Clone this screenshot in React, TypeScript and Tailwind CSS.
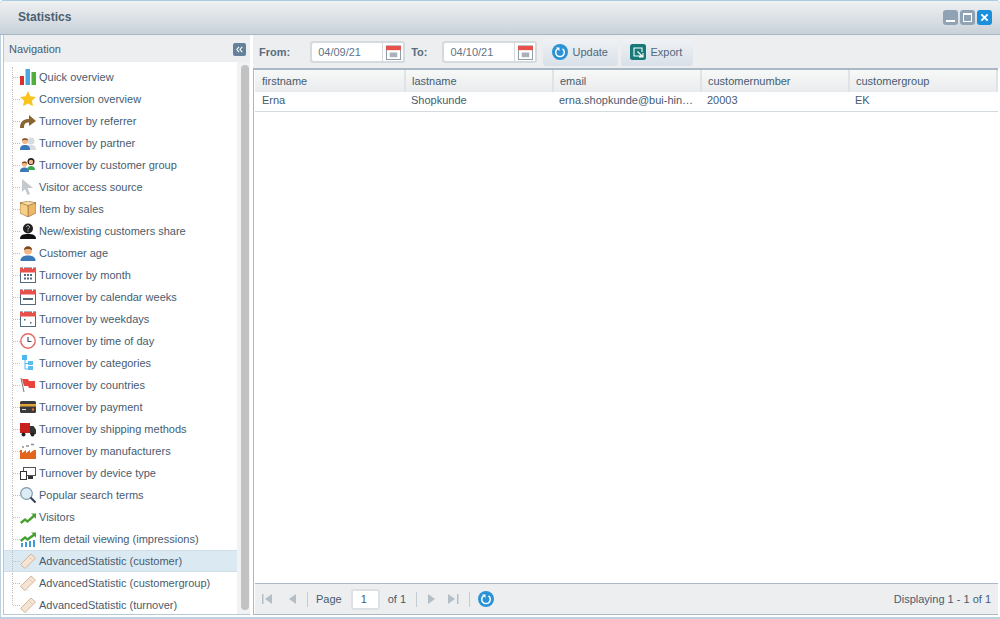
import type { ReactNode } from "react";

const Cal = ({ body }: { body: ReactNode }) => (
  <svg viewBox="0 0 16 16" className="h-4 w-4">
    <rect x="0.5" y="1" width="15" height="14.5" fill="#fff" stroke="#54697c" />
    <rect x="0" y="1" width="16" height="4.5" fill="#e8504a" />
    <rect x="3" y="0" width="1" height="2" fill="#fff" />
    <rect x="12" y="0" width="1" height="2" fill="#fff" />
    {body}
  </svg>
);

const Person = ({ x = 0, c = "#3a78b8", skin = "#f3b684", hair = "#7a4a22" }) => (
  <g transform={`translate(${x} 0)`}>
    <circle cx="5" cy="5" r="3" fill={skin} />
    <path d="M2 4.5C2 1.5 8 1.5 8 4.5 6 3.5 4 3.5 2 4.5Z" fill={hair} />
    <path d="M0 14c0-4 2-5 5-5s5 1 5 5Z" fill={c} />
  </g>
);

const Ticket = () => (
  <svg viewBox="0 0 16 16" className="h-4 w-4">
    <path d="M0.500 11.500 11 1l4.500 4L5 15.500Z" fill="#f6e4d3" stroke="#c9a78c" strokeWidth="0.8" />
    <path d="M8.500 3.500l4.500 4" stroke="#c9a78c" strokeWidth="0.7" strokeDasharray="1 1" />
    <path d="M3 15.800h7" stroke="#dcdcdc" strokeWidth="0.6" />
  </svg>
);

const icons: ReactNode[] = [
  <svg viewBox="0 0 16 16" className="h-4 w-4"><rect x="0" y="7" width="4" height="9" fill="#d9322e" /><rect x="5.500" y="0" width="4.500" height="16" fill="#4aa8e0" /><rect x="11.500" y="3" width="4.500" height="13" fill="#4fae3c" /></svg>,
  <svg viewBox="0 0 16 16" className="h-4 w-4"><path d="M8 0l2.400 5.200 5.600.7-4.100 3.800 1.100 5.600L8 12.500 3 15.300l1.100-5.600L0 5.900l5.600-.7Z" fill="#f7c51e" /></svg>,
  <svg viewBox="0 0 16 16" className="h-4 w-4"><path d="M0 15C0 8 4 6 9 6V2l7 6-7 5V9.500C5 9.500 4 11 4 15Z" fill="#8a6530" /></svg>,
  <svg viewBox="0 0 16 16" className="h-4 w-4"><g transform="translate(6 1)"><circle cx="5" cy="5" r="3.500" fill="#d8dcdf" /><path d="M0 14c0-4 2-5 5-5s5 1 5 5Z" fill="#d8dcdf" /></g><g transform="translate(0 1)"><Person /></g></svg>,
  <svg viewBox="0 0 16 16" className="h-4 w-4"><g transform="translate(0 2.500) scale(.9)"><Person /></g><g transform="translate(6 0)"><circle cx="5" cy="4.500" r="3.500" fill="#2b2320" /><circle cx="5" cy="5" r="2.200" fill="#f3b684" /><path d="M1 13c0-3 2-4 4-4s4 1 4 4Z" fill="#3aa655" /></g></svg>,
  <svg viewBox="0 0 16 16" className="h-4 w-4"><path d="M2 0l11 9H7.500l2.500 6-2.500 1-2.500-6L2 13Z" fill="#c4c9cd" /></svg>,
  <svg viewBox="0 0 16 16" className="h-4 w-4"><path d="M8 4 16 1.500V12l-8 4Z" fill="#eeb766" stroke="#8f6a33" strokeWidth="0.600" /><path d="M8 4 0 1.500V12l8 4Z" fill="#f7cf87" stroke="#8f6a33" strokeWidth="0.600" /><path d="M0 2 8 0l8 2-8 2.500Z" fill="#f9dca3" stroke="#8f6a33" strokeWidth="0.600" /></svg>,
  <svg viewBox="0 0 16 16" className="h-4 w-4"><circle cx="8" cy="5.500" r="5" fill="#222" /><path d="M0 16c0-4 3-5 8-5s8 1 8 5Z" fill="#111" /><path d="M6.500 4c0-2 3-2 3 0 0 1-1.500 1-1.500 2.500M8 7.500v1" stroke="#ccc" fill="none" /></svg>,
  <svg viewBox="0 0 16 16" className="h-4 w-4"><circle cx="8" cy="5.500" r="4" fill="#f3b684" /><path d="M4 5C4 0 12 0 12 5 10 3.500 6 3.500 4 5Z" fill="#7a4a22" /><path d="M0.500 16c0-4 3-5.500 7.500-5.500s7.500 1.500 7.500 5.500Z" fill="#3a78b8" /></svg>,
  <Cal body={<g fill="#54697c"><rect x="4" y="7" width="2" height="2" /><rect x="7" y="7" width="2" height="2" /><rect x="10" y="7" width="2" height="2" /><rect x="4" y="10.500" width="2" height="2" /><rect x="7" y="10.500" width="2" height="2" /><rect x="10" y="10.500" width="2" height="2" /></g>} />,
  <Cal body={<rect x="3" y="9" width="10" height="2" fill="#54697c" />} />,
  <Cal body={<g fill="#54697c"><rect x="4" y="8" width="1.500" height="1.500" /><rect x="10" y="11" width="1.500" height="1.500" /></g>} />,
  <svg viewBox="0 0 16 16" className="h-4 w-4"><circle cx="8" cy="8" r="7.200" fill="#fff" stroke="#e2685f" strokeWidth="1.400" /><path d="M8 4v4.500h3.500" fill="none" stroke="#44576a" strokeWidth="1.200" /></svg>,
  <svg viewBox="0 0 16 16" className="h-4 w-4"><rect x="2" y="0" width="5" height="5" fill="#4cb8ee" /><path d="M5 5v9h3M5 8.500h3" stroke="#4cb8ee" fill="none" /><rect x="8" y="6" width="5" height="4" fill="#5fbcee" /><rect x="8" y="11" width="5" height="4" fill="#5fbcee" /></svg>,
  <svg viewBox="0 0 16 16" className="h-4 w-4"><path d="M1 1l3 14" stroke="#777" /><path d="M2 2h6l1 2h6v7H9L8 9H4Z" fill="#e9433e" /></svg>,
  <svg viewBox="0 0 16 16" className="h-4 w-4"><rect x="0" y="2" width="16" height="12" rx="1.500" fill="#3a3a3a" /><rect x="0" y="5" width="16" height="2.500" fill="#e2a33a" /><rect x="2" y="10" width="4" height="1" fill="#ddd" /><circle cx="13" cy="10.500" r="1.200" fill="#e8702a" /></svg>,
  <svg viewBox="0 0 16 16" className="h-4 w-4"><rect x="0" y="2" width="10" height="10" fill="#c9201c" /><path d="M10 5h3.500L16 8.500V13H10Z" fill="#333" /><circle cx="3.500" cy="13.500" r="2" fill="#222" /><circle cx="12.500" cy="13.500" r="2" fill="#222" /></svg>,
  <svg viewBox="0 0 16 16" className="h-4 w-4"><path d="M0 7h2v3l4-3v3l4-3v3l4-3h2v9H0Z" fill="#e2641f" /><path d="M2 4h2M6 3h3M11 1.500h3" stroke="#8a8f94" strokeWidth="1.500" /></svg>,
  <svg viewBox="0 0 16 16" className="h-4 w-4"><rect x="3.500" y="2.500" width="12" height="8" fill="#fff" stroke="#555" /><rect x="0.500" y="6.500" width="6" height="8" fill="#fff" stroke="#333" /><rect x="8" y="11" width="5" height="3" fill="#333" /></svg>,
  <svg viewBox="0 0 16 16" className="h-4 w-4"><circle cx="6.500" cy="6.500" r="5.800" fill="#dcecf5" stroke="#7f98ab" strokeWidth="1.200" /><path d="M10.500 10.500 15.500 15.500" stroke="#33404c" strokeWidth="2" /></svg>,
  <svg viewBox="0 0 16 16" className="h-4 w-4"><path d="M0 13l5-4 2.500 2L13 6l-2-1.500h5V10l-1.500-2L7.500 14 5 12l-3.500 3Z" fill="#46a02f" /></svg>,
  <svg viewBox="0 0 16 16" className="h-4 w-4"><path d="M0 9l5-4 2.500 2L13 3l-2-1.500h5V7l-1.500-2L7.500 10 5 8l-3.500 3Z" fill="#46a02f" /><g fill="#3f9bdc"><rect x="1" y="12" width="2" height="4" /><rect x="5" y="11" width="2" height="5" /><rect x="9" y="10" width="2" height="6" /><rect x="13" y="9" width="2" height="7" /></g></svg>,
  <Ticket />,
  <Ticket />,
  <Ticket />,
];

const labels = [
  "Quick overview",
  "Conversion overview",
  "Turnover by referrer",
  "Turnover by partner",
  "Turnover by customer group",
  "Visitor access source",
  "Item by sales",
  "New/existing customers share",
  "Customer age",
  "Turnover by month",
  "Turnover by calendar weeks",
  "Turnover by weekdays",
  "Turnover by time of day",
  "Turnover by categories",
  "Turnover by countries",
  "Turnover by payment",
  "Turnover by shipping methods",
  "Turnover by manufacturers",
  "Turnover by device type",
  "Popular search terms",
  "Visitors",
  "Item detail viewing (impressions)",
  "AdvancedStatistic (customer)",
  "AdvancedStatistic (customergroup)",
  "AdvancedStatistic (turnover)",
];

const columns = [
  { name: "firstname", w: "w-[151px]", value: "Erna", pad: "pl-[7px]", headPad: "pl-[7px]" },
  { name: "lastname", w: "w-[148px]", value: "Shopkunde", pad: "pl-[5px]", headPad: "pl-[6px]" },
  { name: "email", w: "w-[148px]", value: "erna.shopkunde@bui-hin…", pad: "pl-[5px]", headPad: "pl-[6px]" },
  { name: "customernumber", w: "w-[148px]", value: "20003", pad: "pl-[5px]", headPad: "pl-[6px]" },
  { name: "customergroup", w: "flex-1", value: "EK", pad: "pl-[5px]", headPad: "pl-[6px]" },
];

const RefreshIcon = ({ size = "h-4 w-4" }: { size?: string }) => (
  <svg viewBox="0 0 16 16" className={size}>
    <circle cx="8" cy="8" r="8" fill="#2a93d5" />
    <path d="M5.500 4.800A4.300 4.300 0 1 0 10.500 4.800" fill="none" stroke="#fff" strokeWidth="1.500" />
    <path d="M4 3.500h3.500V7Z" fill="#fff" />
  </svg>
);

const DateField = ({ value }: { value: string }) => (
  <div className="flex h-[22px] w-[95px] rounded-[3px] bg-[#d5dade] p-[2px]">
    <div className="flex h-[18px] flex-1 items-center rounded-l-[2px] bg-white pl-[6px] text-[#5f7486]">{value}</div>
    <div className="flex h-[18px] w-[21px] items-center justify-center border-l border-[#d5dade] bg-white">
      <svg viewBox="0 0 16 16" className="h-[15px] w-[15px]">
        <rect x="0.500" y="1" width="15" height="14.500" fill="#fff" stroke="#8a97a3" />
        <rect x="0" y="1" width="16" height="4.500" fill="#e8504a" />
        <rect x="4" y="8" width="8" height="5" fill="#a9b2ba" />
      </svg>
    </div>
  </div>
);

const PagerIcon = ({ d }: { d: string }) => (
  <svg viewBox="0 0 14 14" className="h-[14px] w-[14px]">
    <path d={d} fill="#b4bec7" />
  </svg>
);

const Sep = ({ className = "ml-[8px]" }: { className?: string }) => (
  <div className={`${className} mr-[8px] h-[15px] w-px bg-[#c3ccd3]`} />
);

export default function App() {
  return (
    <div className="flex h-[619px] w-[1000px] flex-col overflow-hidden rounded-t-[4px] border-t border-[#a9cde0] bg-[#bdd1de] font-['Liberation_Sans',sans-serif] text-[11px] text-[#475c6f]">
      <div className="flex h-[34px] shrink-0 items-center justify-between border-b border-[#a5b7c5] bg-gradient-to-b from-[#f0f1f2] to-[#c8d1d9] pl-[18px] pr-[8px]">
        <span className="pb-[2px] text-[12px] font-bold text-[#4b5f70]">Statistics</span>
        <div className="flex gap-[2px]">
          <div className="flex h-[15px] w-[15px] items-end justify-center rounded-[3px] bg-[#8fa3b5] pb-[3px]">
            <div className="h-[2px] w-[9px] bg-white" />
          </div>
          <div className="flex h-[15px] w-[15px] items-center justify-center rounded-[3px] bg-[#8fa3b5]">
            <div className="h-[9px] w-[9px] border-[1.500px] border-t-[2px] border-white" />
          </div>
          <div className="flex h-[15px] w-[15px] items-center justify-center rounded-[3px] bg-[#1a8fdc]">
            <svg viewBox="0 0 10 10" className="h-[9px] w-[9px]">
              <path d="M1.500 1.500 8.500 8.500M8.500 1.500 1.500 8.500" stroke="#fff" strokeWidth="2.200" />
            </svg>
          </div>
        </div>
      </div>

      <div className="mb-[2px] flex min-h-0 flex-1 gap-[3px] border-l border-[#bdd1de] bg-white pb-[2px]">
        <div className="ml-[2px] flex w-[247px] shrink-0 flex-col border-b border-l border-[#b4c8d6]">
          <div className="flex h-[27px] shrink-0 items-center justify-between bg-[#eceef0] pl-[5px] pr-[4px] pt-[2px]">
            <span>Navigation</span>
            <div className="flex h-[13px] w-[13px] items-center justify-center rounded-[2px] bg-[#64809a]">
              <svg viewBox="0 0 10 10" className="h-[9px] w-[9px]">
                <path d="M4.500 2 2 5l2.500 3M8 2 5.500 5 8 8" fill="none" stroke="#fff" strokeWidth="1.200" />
              </svg>
            </div>
          </div>
          <div className="flex min-h-0 flex-1 bg-white">
            <div className="flex-1 pt-[4px]">
              {labels.map((label, i) => (
                <div
                  key={label}
                  className={`flex h-[22px] items-center border-y pl-[8px] ${
                    label === "AdvancedStatistic (customer)"
                      ? "border-[#cfdfe9] bg-[#dbe9f3]"
                      : "border-transparent"
                  }`}
                >
                  <div className={`w-px self-stretch border-l border-dotted border-[#c0c0c0] ${i === labels.length - 1 ? "mb-[10px]" : ""}`} />
                  <div className="w-[7px] border-t border-dotted border-[#c0c0c0]" />
                  <div className="mr-[3px] shrink-0">{icons[i]}</div>
                  <span className="whitespace-nowrap">{label}</span>
                </div>
              ))}
            </div>
            <div className="flex w-[13px] shrink-0 justify-end bg-[#f0f2f3] pr-px pt-[3px]">
              <div className="h-[545px] w-[8px] rounded-[4px] bg-[#c2c2c2]" />
            </div>
          </div>
        </div>

        <div className="flex min-w-0 flex-1 flex-col">
          <div className="flex h-[33px] shrink-0 items-center bg-[#eceef0] pl-[6px] pt-px">
            <span className="mr-[20px] font-bold text-[#5a6d7d]">From:</span>
            <DateField value="04/09/21" />
            <span className="ml-[6px] mr-[15px] font-bold text-[#5a6d7d]">To:</span>
            <DateField value="04/10/21" />
            <button className="ml-[6px] flex h-[27px] w-[75px] items-center gap-[4px] rounded-[3px] bg-gradient-to-b from-[#eff2f5] to-[#d8e0e8] pl-[9px] text-[#53677a]">
              <RefreshIcon />
              Update
            </button>
            <button className="ml-[3px] flex h-[27px] w-[72px] items-center gap-[4px] rounded-[3px] bg-gradient-to-b from-[#eff2f5] to-[#d8e0e8] pl-[9px] text-[#53677a]">
              <svg viewBox="0 0 16 16" className="h-4 w-4">
                <rect width="16" height="16" rx="2.500" fill="#177a78" />
                <path d="M11 12H4V4h8v4M7.500 7.500l5 5M13 9v4H9" fill="none" stroke="#fff" strokeWidth="1.100" />
              </svg>
              Export
            </button>
          </div>
          <div className="mr-[2px] flex min-h-0 flex-1 flex-col border-b border-l border-t-2 border-[#a9b8c4] bg-white pl-px">
            <div className="flex h-[22px] shrink-0 bg-gradient-to-b from-[#f7f8f8] to-[#e9ebed]">
              {columns.map((c) => (
                <div key={c.name} className={`${c.w} ${c.headPad} flex items-center border-r-2 border-[#dfe3e6]`}>
                  {c.name}
                </div>
              ))}
            </div>
            <div className="flex h-[20px] shrink-0 border-b border-[#d3dbe1]">
              {columns.map((c) => (
                <div key={c.name} className={`${c.w} ${c.pad} flex items-center pb-[2px]`}>
                  {c.value}
                </div>
              ))}
            </div>
            <div className="flex-1" />
            <div className="flex h-[31px] shrink-0 items-center border-t border-[#a9b8c4] bg-[#eceef0] pl-[6px] pr-[4px]">
              <PagerIcon d="M1 2h1.500v10H1ZM11 2v10L4 7Z" />
              <div className="w-[10px]" />
              <PagerIcon d="M11 2v10L4 7Z" />
              <Sep />
              <span>Page</span>
              <div className="ml-[9px] mr-[8px] h-[21px] w-[29px] rounded-[3px] border-2 border-[#dce1e5] bg-white pl-[8px] leading-[17px]">1</div>
              <span>of 1</span>
              <Sep className="ml-[10px]" />
              <PagerIcon d="M3 2v10l7-5Z" />
              <div className="w-[8px]" />
              <PagerIcon d="M1 2v10l7-5ZM10 2h1.500v10H10Z" />
              <Sep />
              <RefreshIcon />
              <span className="ml-auto pr-[3px]">Displaying 1 - 1 of 1</span>
            </div>
          </div>
        </div>
      </div>
    </div>
  );
}
